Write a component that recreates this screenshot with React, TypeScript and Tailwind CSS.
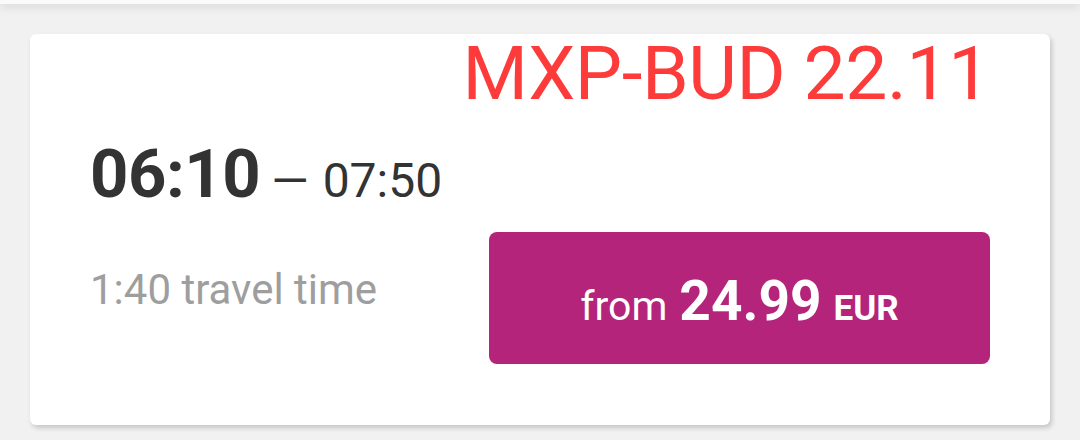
const flight = {
  route: "MXP-BUD 22.11",
  departs: "06:10",
  arrives: "07:50",
  duration: "1:40",
  price: "24.99",
  currency: "EUR",
};

export default function App() {
  return (
    <div className="w-[1080px] h-[440px] overflow-hidden bg-[#f1f1f1] font-['Roboto',sans-serif]">
      {/* app bar edge */}
      <div className="h-[4px] bg-[#fafafa] shadow-[0_2px_10px_rgba(0,0,0,0.18)]" />

      <div className="ml-[30px] mt-[30px] w-[1020px] h-[391px] rounded-[6px] bg-white shadow-[2px_3px_5px_rgba(0,0,0,0.18)] px-[60px] pt-[2px]">
        <div className="flex justify-end">
          <h1 className="text-[75px] leading-none text-[#fd3b3b] tracking-[-0.4px]">{flight.route}</h1>
        </div>

        <div className="flex items-baseline mt-[30px] text-[#333333]">
          <span className="text-[67px] font-bold leading-none tracking-[-0.5px]">{flight.departs}</span>
          <span className="text-[48px] leading-none ml-[11px]">—</span>
          <span className="text-[48px] leading-none ml-[14px]">{flight.arrives}</span>
        </div>

        <div className="flex justify-between items-start mt-[24px]">
          <span className="mt-[37px] text-[42px] leading-none text-[#9e9e9e]">
            {flight.duration} travel time
          </span>
          <button className="w-[501px] h-[132px] rounded-[8px] bg-[#b3247a] text-white flex items-baseline justify-center pt-[42px]">
            <span className="text-[41px] leading-none">from</span>
            <span className="text-[55px] font-bold leading-none ml-[12px]">{flight.price}</span>
            <span className="text-[35px] font-bold leading-none ml-[12px]">{flight.currency}</span>
          </button>
        </div>
      </div>
    </div>
  );
}
